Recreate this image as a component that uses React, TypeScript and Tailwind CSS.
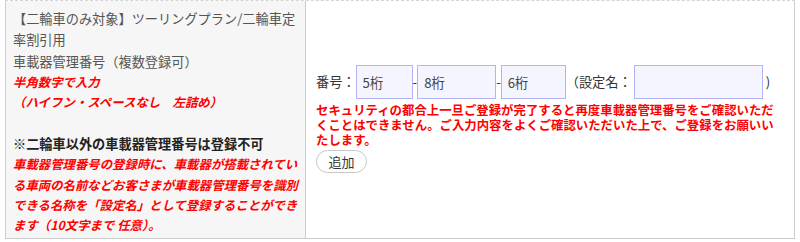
const font = { fontFamily: '"Noto Sans CJK JP", "Noto Sans", sans-serif' };

const NumberInput = ({ placeholder, width }: { placeholder: string; width: string }) => (
	<input
		type="text"
		placeholder={placeholder}
		className={`${width} h-[34px] border border-[#b4b4f5] bg-[#f5f5ff] pl-[6px] text-[13.2px] text-[#333] placeholder:text-[#444] outline-none`}
	/>
);

const App = () => {
	return (
		<div className="w-[800px] h-[242px] bg-white" style={font}>
			<div className="ml-[5px] w-[790px] border-t border-dashed border-[#d4d4d4]">
				<div className="flex border-x border-b border-[#cccccc]">
					<div className="w-[300px] shrink-0 bg-[#f6f6f6] border-r border-[#cccccc] pl-[7px] pr-[3px] pt-[6.5px] pb-[2px]">
						<div className="text-[13.2px] leading-[21.5px] text-[#555]">
							【二輪車のみ対象】ツーリングプラン/二輪車定率割引用
						</div>
						<div className="text-[13.2px] leading-[21.5px] text-[#555]">車載器管理番号（複数登録可）</div>
						<div className="text-[12.4px] leading-[20.3px] text-[#ff0000] font-bold italic">
							半角数字で入力
							<br />
							（ハイフン・スペースなし　左詰め）
							<br />
							<br />
						</div>
						<div className="text-[13.2px] leading-[21.5px] text-[#222] font-bold">
							※二輪車以外の車載器管理番号は登録不可
						</div>
						<div className="text-[12.4px] leading-[20.3px] text-[#ff0000] font-bold italic">
							車載器管理番号の登録時に、車載器が搭載されている車両の名前などお客さまが車載器管理番号を識別できる名称を「設定名」として登録することができます（10文字まで 任意）。
						</div>
					</div>
					<div className="flex-1 flex flex-col justify-center pl-[10px] pr-[15px]">
						<div className="flex items-center text-[13.2px] text-[#333]">
							<span>番号：</span>
							<NumberInput placeholder="5桁" width="w-[57px]" />
							<span>-</span>
							<NumberInput placeholder="8桁" width="w-[79px]" />
							<span>-</span>
							<NumberInput placeholder="6桁" width="w-[65px]" />
							<span className="mr-[2px]">（設定名：</span>
							<NumberInput placeholder="" width="w-[129px]" />
							<span className="ml-[3px]">)</span>
						</div>
						<p className="w-[465px] text-[12.4px] leading-[15px] font-bold text-[#ff0000] pt-[4px]">
							セキュリティの都合上一旦ご登録が完了すると再度車載器管理番号をご確認いただくことはできません。ご入力内容をよくご確認いただいた上で、ご登録をお願いいたします。
						</p>
						<div>
							<button className="w-[51px] h-[23px] rounded-full border border-[#c8c8c8] bg-white text-[13px] text-[#333] leading-none">
								追加
							</button>
						</div>
					</div>
				</div>
			</div>
		</div>
	);
};

export default App;
